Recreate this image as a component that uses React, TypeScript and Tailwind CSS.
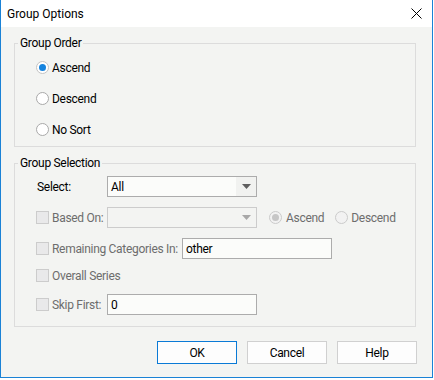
import React from "react";

const FONT = { fontFamily: 'Roboto, "Noto Sans", Arial, sans-serif' };

function Radio({ checked = false, disabled = false }: { checked?: boolean; disabled?: boolean }) {
  const ring = disabled
    ? "border-[#cbcbcb] bg-[#f2f2f2]"
    : checked
    ? "border-[#c4c4c4] bg-white"
    : "border-[#a9a9a9] bg-white";
  const dot = disabled ? "bg-[#c6c6c6]" : "bg-[#1583de]";
  return (
    <span className={`w-[13px] h-[13px] shrink-0 rounded-full border flex items-center justify-center ${ring}`}>
      {checked && <span className={`w-[7px] h-[7px] rounded-full ${dot}`} />}
    </span>
  );
}

function Check() {
  return <span className="w-[13px] h-[13px] shrink-0 border border-[#cccccc] bg-[#e9e9ea]" />;
}

function Arrow({ disabled = false }: { disabled?: boolean }) {
  return (
    <svg width="9" height="5" viewBox="0 0 9 5" className="block">
      <polygon points="0,0 9,0 4.5,5" fill={disabled ? "#a8a8a8" : "#5f5f5f"} />
    </svg>
  );
}

function Dropdown({ value = "", disabled = false }: { value?: string; disabled?: boolean }) {
  return (
    <div
      className={`w-[150px] h-[21px] shrink-0 border flex items-stretch ${
        disabled ? "border-[#cccccc] bg-[#f3f4f2]" : "border-[#acacac] bg-[#fbfcfa]"
      }`}
    >
      <span className="flex-1 flex items-center pl-[3px] text-black">{value}</span>
      <span className={`w-[20px] flex items-center justify-center ${disabled ? "" : "bg-[#f1f2f0]"}`}>
        <Arrow disabled={disabled} />
      </span>
    </div>
  );
}

function TextBox({ value }: { value: string }) {
  return (
    <div className="w-[150px] h-[21px] shrink-0 border border-[#acacac] bg-[#fbfcfa] flex items-center pl-[3px] text-black">
      {value}
    </div>
  );
}

function Button({ label, primary = false }: { label: string; primary?: boolean }) {
  return (
    <div
      className={`w-[80px] h-[23px] border flex items-center justify-center bg-[#fdfdfd] text-black ${
        primary ? "border-[#0a7ad6]" : "border-[#d0d0d0]"
      }`}
    >
      {label}
    </div>
  );
}

export default function App() {
  return (
    <div
      className="w-[434px] h-[380px] bg-white text-[12px] leading-[16px] tracking-[-0.3px] text-black whitespace-nowrap"
      style={FONT}
    >
      <div className="w-[433px] h-[378px] border border-t-0 border-[#1a82d6] flex flex-col bg-[#f3f4f2]">
        {/* Title bar */}
        <div className="h-[27px] shrink-0 bg-white flex items-center justify-between pl-[6px] pr-[10px]">
          <span className="text-[12px] leading-[16px] tracking-normal">Group Options</span>
          <svg width="11" height="11" viewBox="0 0 11 11" className="block">
            <line x1="0.5" y1="0.5" x2="10.5" y2="10.5" stroke="#000" strokeWidth="1" />
            <line x1="10.5" y1="0.5" x2="0.5" y2="10.5" stroke="#000" strokeWidth="1" />
          </svg>
        </div>

        {/* Body */}
        <div className="flex-1 flex flex-col pl-[13px] pr-[16px] pt-[8px]">
          {/* Group Order */}
          <fieldset className="border border-[#dcdcdc] m-0 p-0">
            <legend className="ml-[3px] px-[2px] leading-[16px]">Group Order</legend>
            <div className="flex flex-col gap-[10px] pl-[21px] pt-[6px] pb-[6px]">
              <div className="h-[21px] flex items-center gap-[3px]">
                <Radio checked />
                <span>Ascend</span>
              </div>
              <div className="h-[21px] flex items-center gap-[3px]">
                <Radio />
                <span>Descend</span>
              </div>
              <div className="h-[21px] flex items-center gap-[3px]">
                <Radio />
                <span>No Sort</span>
              </div>
            </div>
          </fieldset>

          {/* Group Selection */}
          <fieldset className="border border-[#dcdcdc] m-0 p-0 mt-[8px]">
            <legend className="ml-[3px] px-[2px] leading-[16px]">Group Selection</legend>
            <div className="flex flex-col pl-[21px] pt-[5px] pb-[11px]">
              <div className="h-[21px] flex items-center">
                <span className="w-[71px] shrink-0 pl-[1px]">Select:</span>
                <Dropdown value="All" />
              </div>
              <div className="h-[21px] flex items-center mt-[10px] text-[#6d6d6d]">
                <span className="w-[71px] shrink-0 flex items-center gap-[3px]">
                  <Check />
                  <span>Based On:</span>
                </span>
                <Dropdown disabled />
                <span className="flex items-center gap-[4px] ml-[12px]">
                  <Radio checked disabled />
                  <span>Ascend</span>
                </span>
                <span className="flex items-center gap-[3px] ml-[11px]">
                  <Radio disabled />
                  <span>Descend</span>
                </span>
              </div>
              <div className="h-[21px] flex items-center mt-[10px] text-[#6d6d6d]">
                <span className="w-[146px] shrink-0 flex items-center gap-[3px]">
                  <Check />
                  <span>Remaining Categories In:</span>
                </span>
                <TextBox value="other" />
              </div>
              <div className="h-[21px] flex items-center mt-[6px] text-[#6d6d6d]">
                <span className="flex items-center gap-[3px]">
                  <Check />
                  <span>Overall Series</span>
                </span>
              </div>
              <div className="h-[21px] flex items-center mt-[8px] text-[#6d6d6d]">
                <span className="w-[71px] shrink-0 flex items-center gap-[3px]">
                  <Check />
                  <span>Skip First:</span>
                </span>
                <TextBox value="0" />
              </div>
            </div>
          </fieldset>

          {/* Buttons */}
          <div className="flex justify-end gap-[10px] mt-[14px] -mr-[1px]">
            <Button label="OK" primary />
            <Button label="Cancel" />
            <Button label="Help" />
          </div>
        </div>
      </div>
    </div>
  );
}
